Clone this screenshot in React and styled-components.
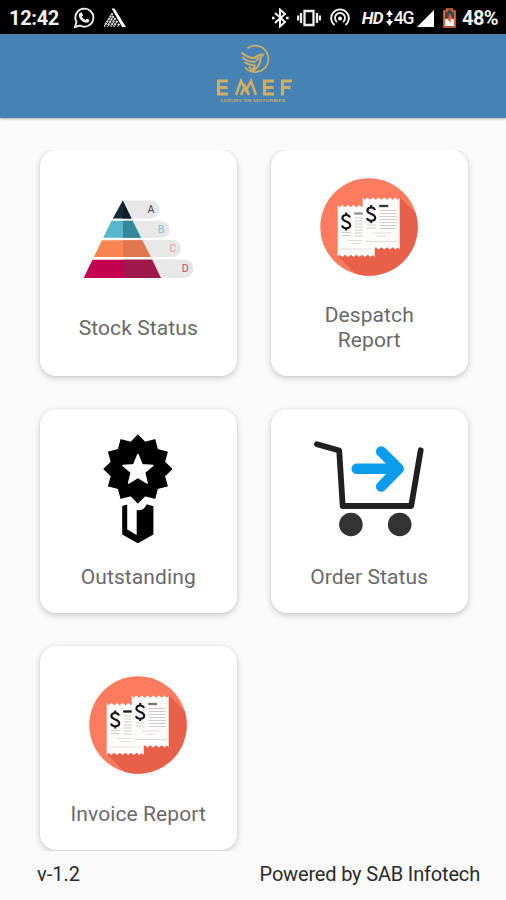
import React from "react";
import styled, { createGlobalStyle } from "styled-components";

const GlobalStyle = createGlobalStyle`
  * { box-sizing: border-box; }
  body { margin: 0; background: #fafafa; font-family: Roboto, "Liberation Sans", sans-serif; }
  svg { display: block; flex: none; }
`;

const Screen = styled.div`
  width: 506px;
  height: 900px;
  display: flex;
  flex-direction: column;
  background: #fafafa;
  overflow: hidden;
`;

const StatusBar = styled.div`
  height: 34px;
  flex: none;
  display: flex;
  align-items: center;
  justify-content: space-between;
  padding: 2px 8px 0 9px;
  background: #000;
  color: #f4f4f4;
`;

const StatusGroup = styled.div`
  display: flex;
  align-items: center;
`;

const StatusText = styled.span`
  font-size: ${(p) => p.$size || 20}px;
  font-weight: ${(p) => p.$weight || 700};
  font-style: ${(p) => (p.$italic ? "italic" : "normal")};
  letter-spacing: ${(p) => p.$track || 0}px;
  margin-left: ${(p) => p.$left || 0}px;
  line-height: 24px;
  white-space: nowrap;
`;

const StatusIcon = styled.svg`
  margin-left: ${(p) => p.$left || 0}px;
`;

const Header = styled.header`
  height: 84px;
  flex: none;
  display: flex;
  justify-content: center;
  padding-top: 8px;
  padding-left: 3px;
  background: #4682b4;
  box-shadow: 0 1px 2px rgba(0, 0, 0, 0.3);
`;

const Scroller = styled.main`
  height: 701px;
  flex: none;
  margin-top: 32px;
  overflow: hidden;
`;

const Grid = styled.div`
  display: grid;
  grid-template-columns: 197.5px 197.5px;
  grid-template-rows: 226px 204px 204px;
  column-gap: 33.5px;
  row-gap: 33px;
  padding-left: 39.5px;
`;

const Card = styled.section`
  display: flex;
  flex-direction: column;
  align-items: center;
  justify-content: center;
  gap: ${(p) => (p.$short ? 28 : 27.5)}px;
  padding-top: ${(p) => (p.$short ? 6 : 5)}px;
  border-radius: 16px;
  background: #fff;
  box-shadow: 0 2px 6px rgba(0, 0, 0, 0.2), 0 0 2px rgba(0, 0, 0, 0.07);
`;

const Label = styled.div`
  width: 142px;
  text-align: center;
  font-size: 21px;
  line-height: 25px;
  letter-spacing: 0.1px;
  color: #6a6a6a;
`;

const Footer = styled.footer`
  flex: 1;
  display: flex;
  align-items: center;
  justify-content: space-between;
  padding: 0 26px 3px 37px;
  font-size: 20px;
  color: #2b2b2b;
`;

const FooterText = styled.span`
  letter-spacing: ${(p) => p.$track}px;
`;

function Logo() {
  return (
    <svg width="84" height="64" viewBox="213 42 84 64" fill="none" stroke="#d0ae61">
      <path d="M247.500 48.200a13.200 13.200 0 1 1-2.500 19" strokeWidth="1.700" />
      <g strokeWidth="2" strokeLinejoin="round">
        <path d="M241.500 52.500q6 5.500 13 5.500 4-4 8.500-3.500l-2.500 3q1 7-8 14l2.500-7" />
        <path d="M242.500 57q4 5 13 5M244.500 62q4 3.500 9 3M249 66.500l3.500 5M256 61l3-4" />
      </g>
      <g strokeWidth="3.200">
        <path d="M228 81h-9.500v13h9.500M218.500 87.500h9" />
        <path d="M236 95l5-14 5 10 5-10 5 14M241 95l4-9 4 9" strokeWidth="2.500" />
        <path d="M274 81h-9.500v13h9.500M264.500 87.500h9" />
        <path d="M292 81h-9.500v14.500M282.500 87.500h8" />
      </g>
      <text x="220.500" y="101.800" textLength="65" lengthAdjust="spacingAndGlyphs" fontFamily="Roboto" fontWeight="700" fontSize="4" fill="#b6a873" stroke="none">LUXURY ON MOTORBIKE</text>
    </svg>
  );
}

function WhatsAppIcon() {
  return (
    <StatusIcon $left={14} width="22" height="22" viewBox="0 0 22 22">
      <path d="M2 20l1.500-5a9 9 0 1 1 3.500 3.500z" fill="none" stroke="#eee" strokeWidth="1.900" />
      <path d="M7.300 5.500l1.800.3 1 2.600-1.100 1.400q1.200 2.200 3.600 3.100l1.300-1.300 2.500 1.200q.1 3-3.200 3-6.400-1.200-7.400-7.300-.1-2.100 1.500-3z" fill="#eee" />
    </StatusIcon>
  );
}

function TriangleIcon() {
  return (
    <StatusIcon $left={9} width="22" height="20" viewBox="0 0 23 20">
      <path d="M8 0h3l12 19.500h-4z" fill="#fff" />
      <path d="M9 5L0 19M10 8L3.500 19M12 10L7 19M14 13l-4 6M16 16l-2 3" stroke="#ddd" strokeWidth="2.100" strokeDasharray="2.400 .6" />
    </StatusIcon>
  );
}

function BluetoothIcon() {
  return (
    <StatusIcon width="17" height="20" viewBox="0 0 17 20">
      <path d="M3 5l10 9-5 4.500v-17L13 6 3 15" fill="none" stroke="#fff" strokeWidth="1.900" />
      <path d="M0 8.700h2.600v2.600H0zM14 8.700h2.600v2.600H14z" fill="#fff" />
    </StatusIcon>
  );
}

function VibrateIcon() {
  return (
    <StatusIcon $left={8} width="24" height="20" viewBox="0 0 24 20">
      <path d="M7.500 3h9v14h-9zM4 5v10M20 5v10M1 7.500v5M23 7.500v5" fill="none" stroke="#eee" strokeWidth="2.300" />
    </StatusIcon>
  );
}

function HotspotIcon() {
  return (
    <StatusIcon $left={9} width="20" height="20" viewBox="0 0 20 20" fill="none" stroke="#eee" strokeWidth="1.900">
      <path d="M4.500 17a8.800 8.800 0 1 1 11 0M7 14a5 5 0 1 1 6 0" />
      <circle cx="10" cy="10.500" r="2" fill="#fff" stroke="none" />
    </StatusIcon>
  );
}

function DataArrowsIcon() {
  return (
    <StatusIcon $left={3} width="7" height="16" viewBox="0 0 7 16">
      <path d="M3.500 0L7 5H4.500v2h-2V5H0zM3.500 16L7 11H4.500V9h-2v2H0z" fill="#fff" />
    </StatusIcon>
  );
}

function SignalIcon() {
  return (
    <StatusIcon $left={4} width="17" height="17" viewBox="0 0 17 17">
      <path d="M17 0v17H0z" fill="#fff" />
    </StatusIcon>
  );
}

function BatteryIcon() {
  return (
    <StatusIcon $left={9} width="13" height="20" viewBox="0 0 12 20" preserveAspectRatio="none">
      <path d="M1 3h2.500V1h5v2H11v16H1z" fill="#454545" stroke="#e2683a" strokeWidth="1.700" />
      <path d="M2 11h8v7H2z" fill="#fff" />
      <path d="M6 5l3 6H7v4L3 10h2z" fill="#d9653a" />
    </StatusIcon>
  );
}

const TIERS = [
  { id: "A", y: 200.5, h: 18, end: 159.5, text: "#444", x: 151 },
  { id: "B", y: 220.7, h: 17.3, end: 169.5, text: "#7cc6d2", x: 161 },
  { id: "C", y: 240, h: 17, end: 181, text: "#ee9c78", x: 173 },
  { id: "D", y: 259.6, h: 18.4, end: 193.5, text: "#cd4a72", x: 185.3 },
];

function PyramidIcon() {
  return (
    <svg width="120" height="98" viewBox="78 190 120 98">
      {TIERS.map((t) => (
        <g key={t.id}>
          <path
            d={`M123 ${t.y}H${t.end - t.h / 2}a${t.h / 2} ${t.h / 2} 0 0 1 0 ${t.h}H123z`}
            fill="#e7e7e7"
          />
          <text x={t.x} y={t.y + t.h / 2 + 3.6} textAnchor="middle" fontFamily="Roboto" fontSize="10.500" fill={t.text}>{t.id}</text>
        </g>
      ))}
      <path d="M122.700 200.500L131.500 218.400h-18.700z" fill="#152c3b" />
      <path d="M122.700 200.500L131.500 218.400h-8.800z" fill="#0e202b" />
      <path d="M111.500 220.800H132.500L141 237.800H103.200z" fill="#59b7cd" />
      <path d="M123 220.800H132.500L141 237.800H123z" fill="#31899b" />
      <path d="M102 240.200H142.200L150.700 257H93.800z" fill="#fb8551" />
      <path d="M123 240.200H142.200L150.700 257H123z" fill="#df764d" />
      <path d="M92.500 259.700H152L160.800 278H83.700z" fill="#c3004d" />
      <path d="M123 259.700H152L160.800 278H123z" fill="#a0184b" />
    </svg>
  );
}

function Receipt({ x, y, dark }) {
  return (
    <g transform={`translate(${x} ${y})`}>
      <path
        d="M0 0l1.800 2.200 2.800-2.200 2.800 2.200L10.200 0 13 2.200 15.900 0l2.800 2.200L21.500 0l2.800 2.200L27.200 0 30 2.200 32.800 0l2.200 2.200L37 0v52l-2-2-2.200 2-2.800-2.200-2.800 2.200-2.900-2.200-2.800 2.200-2.800-2.200-2.800 2.200-2.900-2.200-2.800 2.200-2.800-2.200L4.600 52l-2.800-2.200L0 52z"
        fill="#fdfcfb"
      />
      <path d="M17 13h17M17 16h17M17 19h17M17 22h17M17 25h17M17 28h17M17 31h17M4 27.500h9M4 30.500h9" stroke="#cfcdcc" strokeWidth="1" />
      <path d="M10 35.500h18M14 38.500h9M2 44h33" stroke="#e0dedc" strokeWidth="1" />
      <path d="M16.500 8.500h9" stroke={dark} strokeWidth="2.300" />
      <path d="M12.200 12.500q-.8-2.500-3.700-2.500-3.800 0-3.800 3 0 2.200 3.800 3.400 4 1.200 4 3.800 0 3-4 3-3.500 0-4.200-2.800M8.500 7.500V10M8.500 23v2.500" fill="none" stroke="#171717" strokeWidth="2.100" />
    </g>
  );
}

function ReceiptIcon({ id, leftBar, rightBar }) {
  return (
    <svg width="98" height="98" viewBox="320.300 178 98 98">
      <defs>
        <clipPath id={id}><circle cx="369.300" cy="227" r="48.700" /></clipPath>
      </defs>
      <g clipPath={`url(#${id})`}>
        <path d="M320 178h99v99h-99z" fill="#fd7c60" />
        <path d="M400 197l30 30v60h-61L338 256z" fill="#e8604a" />
      </g>
      <Receipt x={338} y={205} dark={leftBar} />
      <Receipt x={363} y={197.500} dark={rightBar} />
    </svg>
  );
}

const polar = (count, outer, inner, cx, cy) =>
  Array.from({ length: count * 2 }, (_, i) => {
    const r = i % 2 ? inner : outer;
    const a = (i * Math.PI) / count - Math.PI / 2;
    return `${(cx + r * Math.cos(a)).toFixed(2)},${(cy + r * Math.sin(a)).toFixed(2)}`;
  }).join(" ");

function MedalIcon() {
  return (
    <svg width="98" height="98" viewBox="89.300 438.500 98 98" overflow="visible">
      <polygon points={polar(12, 33.8, 27.5, 138.2, 468.5)} fill="#000" stroke="#000" strokeWidth="1.200" strokeLinejoin="round" />
      <polygon points={polar(5, 15.8, 7, 138.2, 469.8)} fill="#fff" stroke="#fff" strokeWidth="1.500" strokeLinejoin="round" />
      <path d="M122.500 505.500l5-1.500V529l9.500 5.500V509.500q7 1.500 10-5.700l6.700 2V534L138.200 542.700 122.500 534z" fill="#000" />
    </svg>
  );
}

function CartIcon() {
  return (
    <svg width="112" height="98" viewBox="313.300 438.500 112 98" fill="none" strokeLinecap="round" strokeLinejoin="round">
      <path d="M317.300 443.700L339.500 450l3.500 55.500h68.500L421 449.800" stroke="#202020" strokeWidth="5.800" />
      <circle cx="351.200" cy="524" r="11.800" fill="#333" />
      <circle cx="400" cy="524" r="11.800" fill="#333" />
      <path d="M357 468.300h41M381.500 451l17.500 17.300L381.500 486" stroke="#0c9cec" strokeWidth="10.500" />
    </svg>
  );
}

export default function App() {
  return (
    <>
      <GlobalStyle />
      <Screen>
        <StatusBar>
          <StatusGroup>
            <StatusText $size={20} $track={-0.3}>12:42</StatusText>
            <WhatsAppIcon />
            <TriangleIcon />
          </StatusGroup>
          <StatusGroup>
            <BluetoothIcon />
            <VibrateIcon />
            <HotspotIcon />
            <StatusText $size={17} $italic $left={12} $track={-0.7}>HD</StatusText>
            <DataArrowsIcon />
            <StatusText $size={17.5} $weight={500} $left={1} $track={-1.3}>4G</StatusText>
            <SignalIcon />
            <BatteryIcon />
            <StatusText $size={20} $left={6} $track={-0.6}>48%</StatusText>
          </StatusGroup>
        </StatusBar>
        <Header><Logo /></Header>
        <Scroller>
          <Grid>
            <Card><PyramidIcon /><Label>Stock Status</Label></Card>
            <Card><ReceiptIcon id="despatch" leftBar="#8b8f8b" rightBar="#24402f" /><Label>Despatch Report</Label></Card>
            <Card $short><MedalIcon /><Label>Outstanding</Label></Card>
            <Card $short><CartIcon /><Label>Order Status</Label></Card>
            <Card $short><ReceiptIcon id="invoice" leftBar="#171717" rightBar="#777" /><Label>Invoice Report</Label></Card>
          </Grid>
        </Scroller>
        <Footer>
          <FooterText $track={0}>v-1.2</FooterText>
          <FooterText $track={-0.17}>Powered by SAB Infotech</FooterText>
        </Footer>
      </Screen>
    </>
  );
}
